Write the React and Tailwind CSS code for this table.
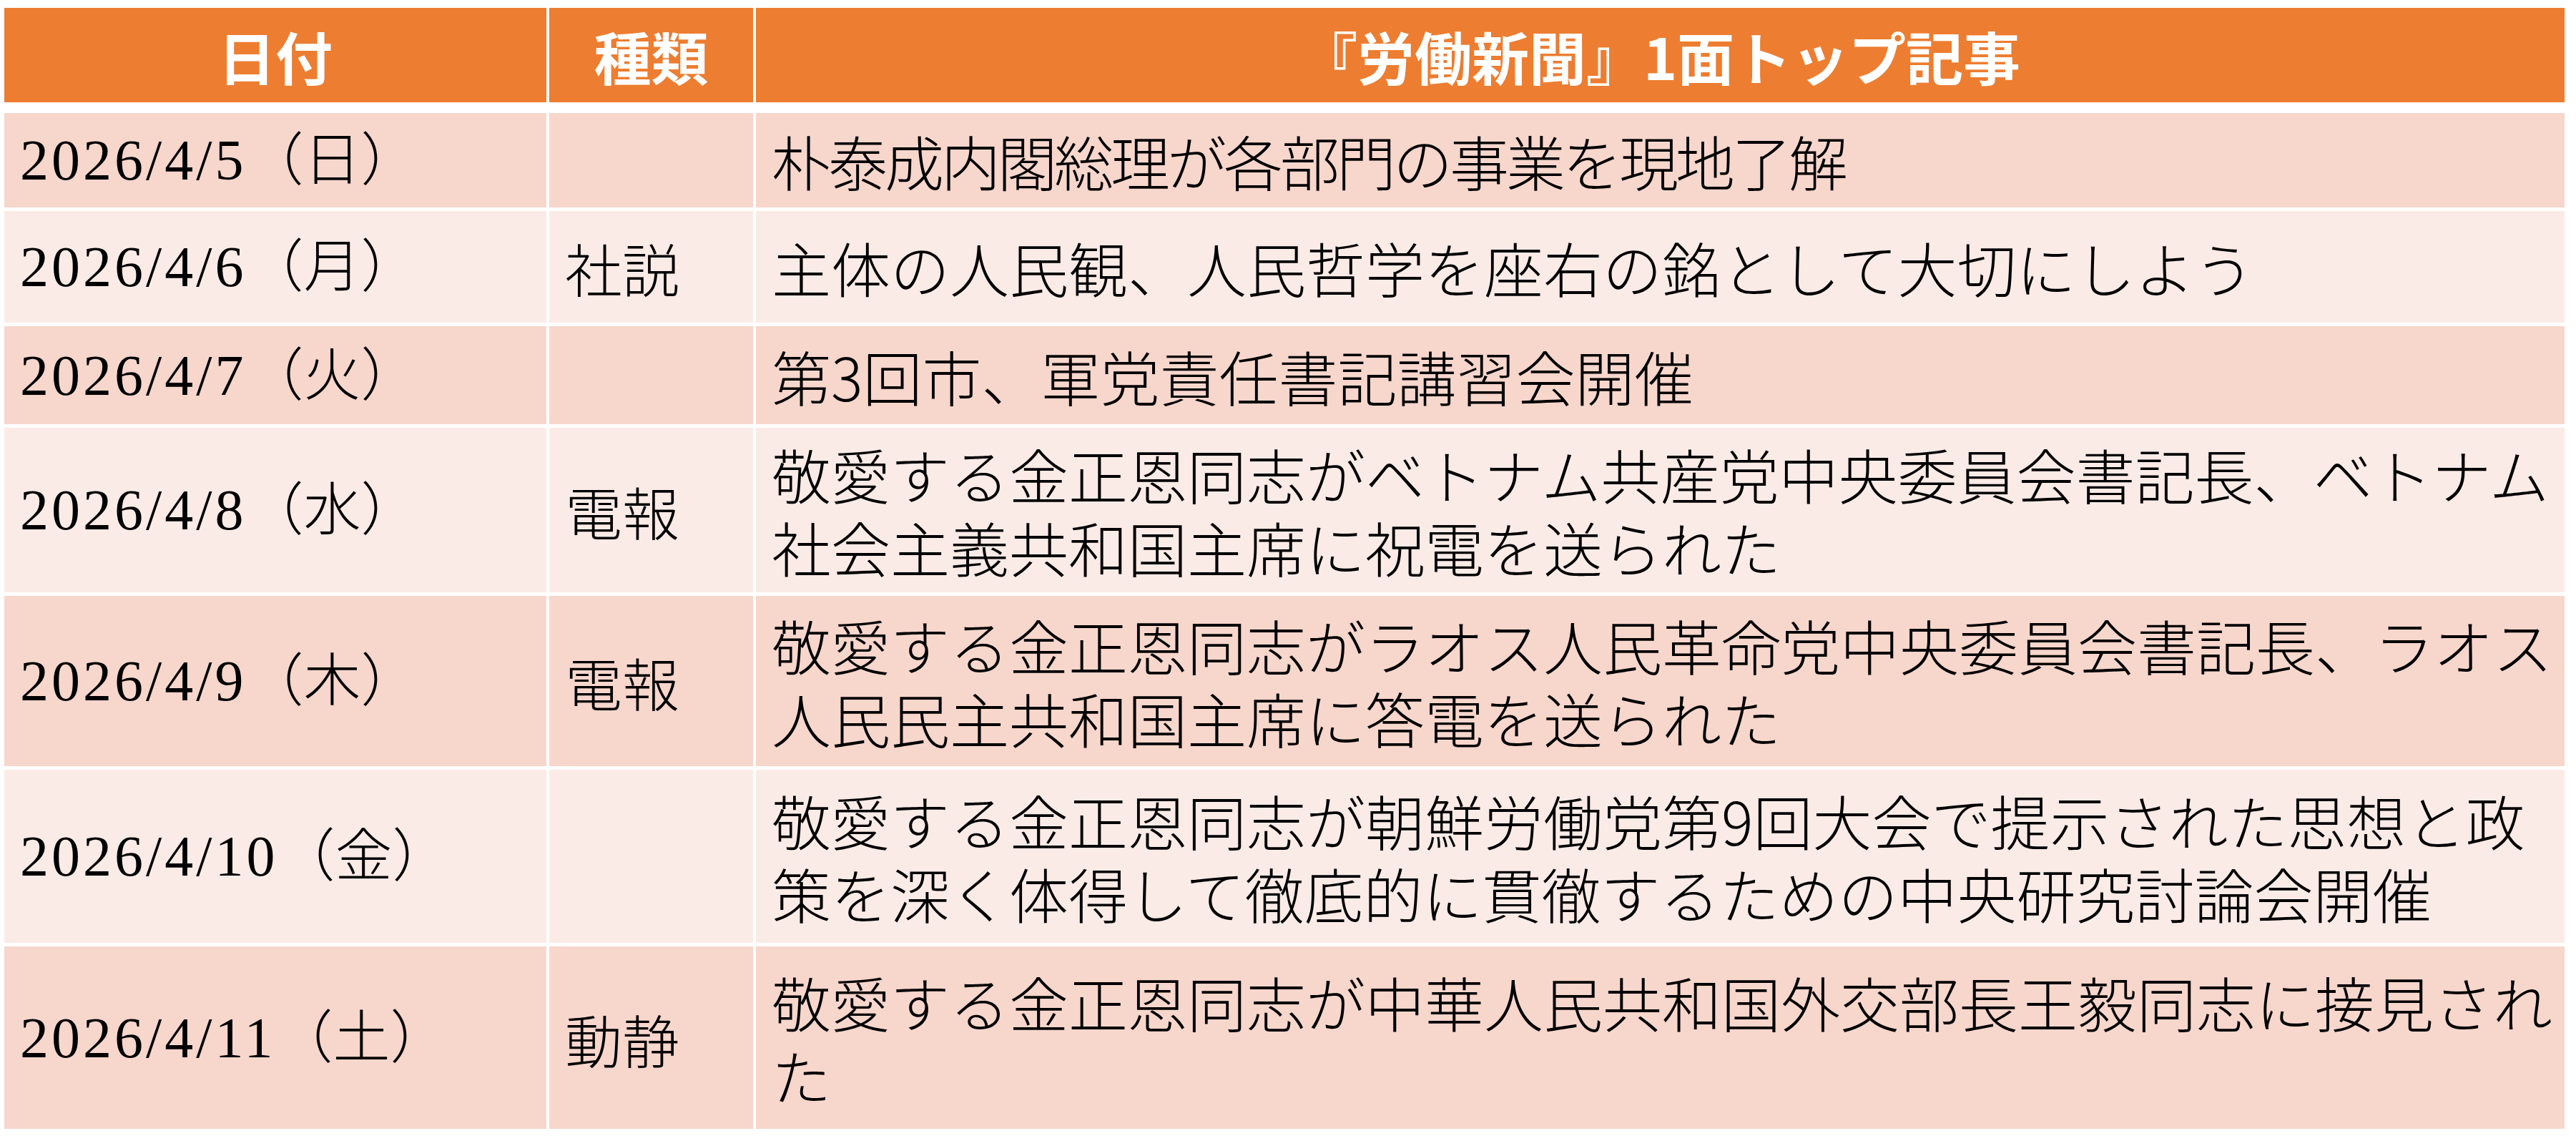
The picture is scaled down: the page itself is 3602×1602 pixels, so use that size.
import React from 'react';

const ROWS = [
  { date: '2026/4/5', day: '日', kind: '', text: '朴泰成内閣総理が各部門の事業を現地了解', h: 'h-[132px]', bg: 'bg-[#f7d6cc]', tight: true },
  { date: '2026/4/6', day: '月', kind: '社説', text: '主体の人民観、人民哲学を座右の銘として大切にしよう', h: 'h-[156px]', bg: 'bg-[#fbebe7]' },
  { date: '2026/4/7', day: '火', kind: '', text: '第3回市、軍党責任書記講習会開催', h: 'h-[137px]', bg: 'bg-[#f7d6cc]' },
  { date: '2026/4/8', day: '水', kind: '電報', text: '敬愛する金正恩同志がベトナム共産党中央委員会書記長、ベトナム社会主義共和国主席に祝電を送られた', h: 'h-[230px]', bg: 'bg-[#fbebe7]' },
  { date: '2026/4/9', day: '木', kind: '電報', text: '敬愛する金正恩同志がラオス人民革命党中央委員会書記長、ラオス人民民主共和国主席に答電を送られた', h: 'h-[238px]', bg: 'bg-[#f7d6cc]' },
  { date: '2026/4/10', day: '金', kind: '', text: '敬愛する金正恩同志が朝鮮労働党第9回大会で提示された思想と政策を深く体得して徹底的に貫徹するための中央研究討論会開催', h: 'h-[242px]', bg: 'bg-[#fbebe7]' },
  { date: '2026/4/11', day: '土', kind: '動静', text: '敬愛する金正恩同志が中華人民共和国外交部長王毅同志に接見された', h: 'h-[255px]', bg: 'bg-[#f7d6cc]' },
];

const jp = "font-['Noto_Sans_CJK_JP','Noto_Sans',sans-serif]";

function HeaderRow() {
  return (
    <div className={`grid grid-cols-[758px_285px_2529px] gap-x-[4px] h-[132px] mb-[10px] ${jp} font-bold text-white text-[80px] leading-none`}>
      <div className="bg-[#ed7d31] flex items-center justify-center">日付</div>
      <div className="bg-[#ed7d31] flex items-center justify-center">種類</div>
      <div className="bg-[#ed7d31] flex items-center justify-center [text-spacing-trim:space-all]">『労働新聞』1面トップ記事</div>
    </div>
  );
}

function BodyRow({ row }) {
  return (
    <div className={`grid grid-cols-[758px_285px_2529px] gap-x-[4px] ${row.h} text-black`}>
      <div className={`${row.bg} flex items-center px-[22px]`}>
        <span className="font-['Liberation_Serif','Noto_Sans_CJK_JP',serif] text-[80px] leading-none tracking-[4px] [text-spacing-trim:space-all]">
          {row.date}<span className="tracking-normal font-light">（{row.day}）</span>
        </span>
      </div>
      <div className={`${row.bg} flex items-center px-[22px] ${jp} font-light text-[80px] leading-none`}>
        {row.kind}
      </div>
      <div className={`${row.bg} flex items-center pl-[22px] pr-[10px] ${jp} font-light text-[83px] leading-[102px]`}>
        <p className={row.tight ? 'tracking-[-4px]' : ''}>{row.text}</p>
      </div>
    </div>
  );
}

export default function App() {
  return (
    <div className="w-[3602px] h-[1602px] bg-white pt-[11px] pl-[6px]">
      <div className="flex flex-col gap-[5px] w-[3580px]">
        <HeaderRow />
        {ROWS.map((r) => (
          <BodyRow key={r.date} row={r} />
        ))}
      </div>
    </div>
  );
}
